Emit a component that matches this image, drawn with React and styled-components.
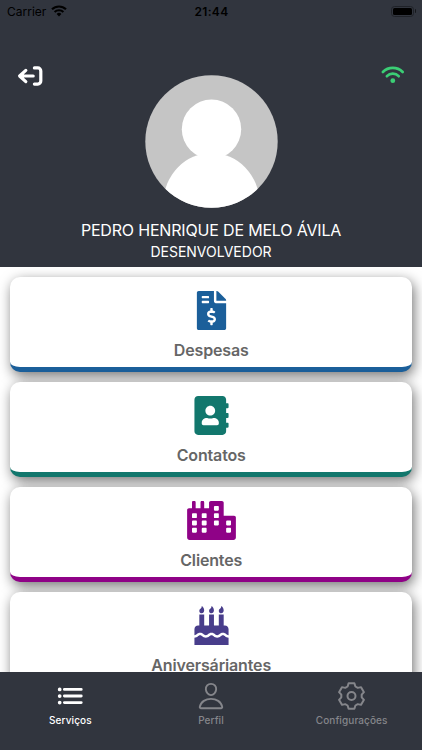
import styled, { createGlobalStyle } from "styled-components";
import {
  FaAddressBook,
  FaBirthdayCake,
  FaCity,
  FaFileInvoiceDollar,
} from "react-icons/fa";
import { IoList, IoPersonOutline } from "react-icons/io5";

const services = [
  { title: "Despesas", color: "#1b5f9a", icon: FaFileInvoiceDollar },
  { title: "Contatos", color: "#12776d", icon: FaAddressBook },
  { title: "Clientes", color: "#8f0287", icon: FaCity, iconWidth: 49 },
  { title: "Aniversáriantes", color: "#483d8b", icon: FaBirthdayCake },
];

const SignalIcon = () => (
  <svg width="16" height="12" viewBox="0 0 16 12">
    <g fill="none" stroke="#000" strokeWidth="2.1">
      <path d="M1 4.3a10 10 0 0 1 14 0" />
      <path d="M3.6 7a6.3 6.3 0 0 1 8.8 0" />
    </g>
    <path d="M8 11.4L5.6 9a3.5 3.5 0 0 1 4.8 0z" />
  </svg>
);

const LogoutIcon = () => (
  <svg width="26" height="20" viewBox="0 0 26 20">
    <g
      fill="none"
      stroke="#fff"
      strokeWidth="3.2"
      strokeLinecap="round"
      strokeLinejoin="round"
    >
      <path d="M8.8 4.4L2.6 10l6.2 5.6M3.4 10H16.2" />
      <path d="M17.4 1.9h3.4a3 3 0 0 1 3 3v10.2a3 3 0 0 1-3 3h-3.4" />
      <path d="M5.6 9.4v1.2" />
    </g>
  </svg>
);

const WifiIcon = () => (
  <svg width="26" height="20" viewBox="0 0 26 20">
    <g fill="none" stroke="currentColor" strokeWidth="2.7" strokeLinecap="round">
      <path d="M2.9 7a14 14 0 0 1 19.8 0" />
      <path d="M6.9 11.2a8 8 0 0 1 11.8 0" />
    </g>
    <circle cx="12.8" cy="15.7" r="2.4" fill="currentColor" />
  </svg>
);

// one tooth of the gear, turned by 60° for each of the six
const tooth = [
  [-3.9, -9.5],
  [-2.9, -12.7],
  [2.9, -12.7],
  [3.9, -9.5],
];

const gearPoints = [0, 1, 2, 3, 4, 5]
  .flatMap((n) => {
    const angle = (n * Math.PI) / 3;
    return tooth.map(([x, y]) => [
      (x * Math.cos(angle) - y * Math.sin(angle)).toFixed(2),
      (x * Math.sin(angle) + y * Math.cos(angle)).toFixed(2),
    ]);
  })
  .join(" ");

const GearIcon = () => (
  <svg width="30" height="30" viewBox="-14.5 -15 30 30">
    <g
      fill="none"
      stroke="currentColor"
      strokeWidth="2"
      strokeLinejoin="round"
    >
      <polygon points={gearPoints} />
      <circle r="4" />
    </g>
  </svg>
);

const Avatar = () => (
  <svg width="133" height="133" viewBox="0 0 133 133">
    <clipPath id="avatar">
      <circle cx="66.5" cy="66.5" r="66.2" />
    </clipPath>
    <g clipPath="url(#avatar)">
      <rect width="133" height="133" fill="#c5c5c5" />
      <circle cx="66.5" cy="54.2" r="29.7" fill="#fff" />
      <ellipse cx="66.5" cy="128" rx="48" ry="50" fill="#fff" />
    </g>
  </svg>
);

const tabs = [
  { title: "Serviços", icon: IoList, active: true },
  { title: "Perfil", icon: IoPersonOutline },
  { title: "Configurações", icon: GearIcon },
];

const App = () => {
  return (
    <>
      <GlobalStyle />
      <Screen>
        <Header>
          <StatusBar>
            <Carrier>
              Carrier
              <SignalIcon />
            </Carrier>
            <Clock>21:44</Clock>
            <Battery>
              <BatteryCase>
                <BatteryLevel />
              </BatteryCase>
              <BatteryTip />
            </Battery>
          </StatusBar>
          <Profile>
            <LogoutButton>
              <LogoutIcon />
            </LogoutButton>
            <Avatar />
            <Online>
              <WifiIcon />
            </Online>
          </Profile>
          <UserName>PEDRO HENRIQUE DE MELO ÁVILA</UserName>
          <UserRole>DESENVOLVEDOR</UserRole>
        </Header>

        <ServiceList>
          {services.map(({ title, color, icon: Icon, iconWidth = 39 }) => (
            <ServiceCard key={title} $color={color}>
              <ServiceIcon $color={color} $width={iconWidth}>
                <Icon />
              </ServiceIcon>
              <ServiceTitle>{title}</ServiceTitle>
            </ServiceCard>
          ))}
        </ServiceList>

        <TabBar>
          {tabs.map(({ title, icon: Icon, active }) => (
            <Tab key={title} $active={active}>
              <Icon size={30} />
              <TabLabel>{title}</TabLabel>
            </Tab>
          ))}
        </TabBar>
      </Screen>
    </>
  );
};

export default App;

const GlobalStyle = createGlobalStyle`
  * {
    box-sizing: border-box;
  }

  body {
    margin: 0;
    font-family: Inter, "Liberation Sans", sans-serif;
  }

  svg {
    display: block;
    flex-shrink: 0;
  }
`;

const Screen = styled.div`
  display: flex;
  flex-direction: column;
  height: 100vh;
  overflow: hidden;
  background: #fff;
`;

const Header = styled.header`
  flex: none;
  height: 267px;
  background: #31353e;
  color: #fff;
  text-align: center;
`;

const StatusBar = styled.div`
  display: grid;
  grid-template-columns: 1fr auto 1fr;
  align-items: center;
  height: 22px;
  padding: 0 6px 0 7px;
  color: #000;
`;

const Carrier = styled.span`
  display: flex;
  align-items: center;
  gap: 5px;
  font-size: 12px;
`;

const Clock = styled.span`
  font-size: 12px;
  font-weight: 600;
  letter-spacing: 0.35px;
`;

const Battery = styled.span`
  display: flex;
  align-items: center;
  justify-content: flex-end;
  gap: 1px;
`;

const BatteryCase = styled.span`
  width: 23px;
  height: 11px;
  padding: 1px;
  border: 1px solid #1f2228;
  border-radius: 3.5px;
`;

const BatteryLevel = styled.span`
  display: block;
  height: 100%;
  border-radius: 1.5px;
  background: #000;
`;

const BatteryTip = styled.span`
  width: 1px;
  height: 4px;
  border-radius: 0 2px 2px 0;
  background: #15171b;
`;

const Profile = styled.div`
  display: flex;
  justify-content: space-between;
  margin-top: 53px;
  padding: 0 16px 0 17px;
`;

const LogoutButton = styled.button`
  align-self: flex-start;
  margin-top: -9px;
  padding: 0;
  border: 0;
  background: none;
`;

const Online = styled.span`
  margin-top: -10px;
  padding-left: 1px;
  color: #3bce75;
`;

const UserName = styled.h1`
  margin: 11px 0 0;
  font-size: 16px;
  font-weight: 400;
  line-height: 22px;
  letter-spacing: -0.18px;
`;

const UserRole = styled.p`
  margin: 0;
  font-size: 14px;
  line-height: 22px;
`;

const ServiceList = styled.main`
  flex: 1;
  display: flex;
  flex-direction: column;
  gap: 10px;
  min-height: 0;
  overflow: hidden;
  padding: 10px 10px 0 10.4px;
`;

const ServiceCard = styled.section`
  flex: none;
  display: flex;
  flex-direction: column;
  align-items: center;
  height: 95px;
  padding-top: 14px;
  border-bottom: 5px solid ${({ $color }) => $color};
  border-radius: 10px;
  background: #fff;
  box-shadow: 2px 4px 13px rgba(0, 0, 0, 0.55);
`;

const ServiceIcon = styled.span`
  color: ${({ $color }) => $color};

  svg {
    width: ${({ $width }) => $width}px;
    height: 39px;
  }
`;

const ServiceTitle = styled.h2`
  margin: 9px 0 0;
  color: #666;
  font-size: 16px;
  font-weight: 600;
  line-height: 22px;
  letter-spacing: -0.15px;
`;

const TabBar = styled.nav`
  flex: none;
  display: grid;
  grid-template-columns: repeat(3, 1fr);
  height: 78px;
  background: #31353e;
`;

const Tab = styled.a`
  display: flex;
  flex-direction: column;
  align-items: center;
  padding-top: 9px;
  color: ${({ $active }) => ($active ? "#fff" : "#85868b")};
`;

const TabLabel = styled.span`
  margin-top: 3px;
  font-size: 10px;
  font-weight: 500;
  line-height: 12px;
  letter-spacing: 0.1px;
`;
